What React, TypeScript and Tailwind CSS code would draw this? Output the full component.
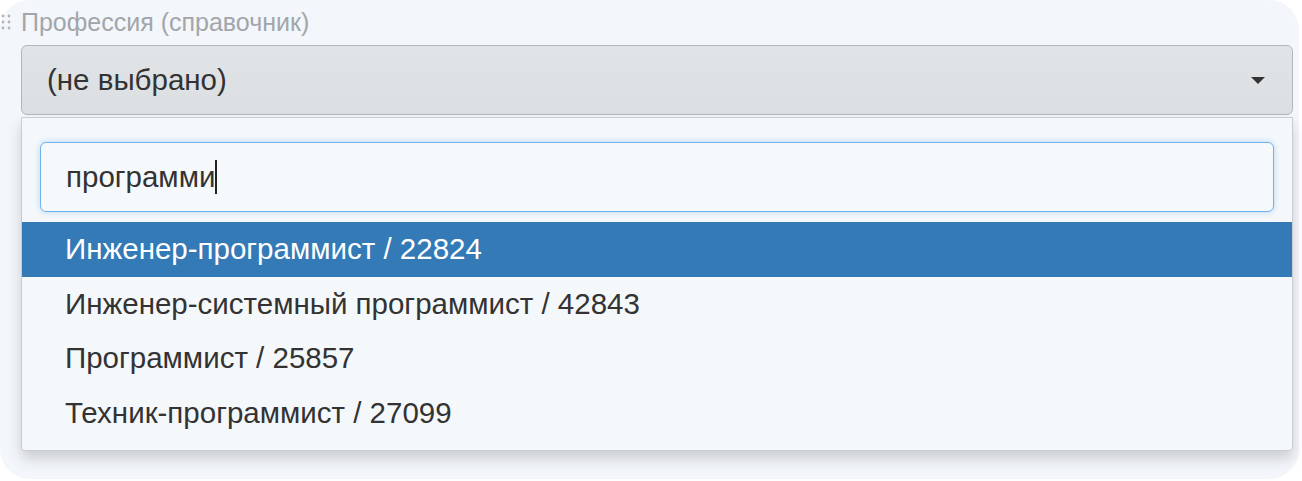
import React from "react";

const options = [
  "Инженер-программист / 22824",
  "Инженер-системный программист / 42843",
  "Программист / 25857",
  "Техник-программист / 27099",
];

const DragHandle = () => (
  <svg width="12" height="22" viewBox="0 0 12 22" className="shrink-0">
    {[5, 11, 17].map((y) =>
      [3, 9].map((x) => (
        <circle key={`${x}-${y}`} cx={x} cy={y} r="1.4" fill="#b0b4b8" />
      ))
    )}
  </svg>
);

const App = () => {
  return (
    <div className="w-[1302px] h-[481px] bg-white font-['Liberation_Sans',Arial,sans-serif]">
      <div className="w-[1299px] h-[479px] rounded-[30px] bg-[#f3f6fa] pl-[21px] pr-[6px] pt-[8px]">
        <div className="flex items-center gap-[10px] -ml-[21px] h-[28px]">
          <DragHandle />
          <span className="text-[25px] leading-none text-[#a2a6aa] -ml-[1px]">Профессия (справочник)</span>
        </div>

        <div className="mt-[9px] h-[70px] flex items-center justify-between rounded-[6px] border border-[#b4b7ba] bg-gradient-to-b from-[#e1e4e7] to-[#dcdfe2] pl-[25px] pr-[27px]">
          <span className="text-[29.5px] text-[#333]">(не выбрано)</span>
          <span className="w-0 h-0 border-l-[7px] border-r-[7px] border-t-[7px] border-l-transparent border-r-transparent border-t-[#333]" />
        </div>

        <div className="mt-[2px] h-[334px] rounded-b-[4px] border border-[#c9ccd0] bg-[#f5f8fb] shadow-[0_8px_14px_rgba(0,0,0,0.16)] pt-[24px]">
          <div className="mx-[18px] h-[70px] flex items-center rounded-[6px] border border-[#74b1e8] bg-[#f6f9fc] shadow-[0_0_6px_rgba(102,175,233,0.45)] pl-[25px]">
            <span className="text-[29.5px] text-[#333]">программи</span>
            <span className="w-[1.5px] h-[34px] bg-[#222]" />
          </div>

          <ul className="mt-[10px]">
            {options.map((o, i) => (
              <li
                key={o}
                className={`h-[54.5px] flex items-center pl-[43px] text-[29.5px] ${
                  i === 0 ? "bg-[#337ab7] text-white" : "text-[#333]"
                }`}
              >
                {o}
              </li>
            ))}
          </ul>
        </div>
      </div>
    </div>
  );
};

export default App;
